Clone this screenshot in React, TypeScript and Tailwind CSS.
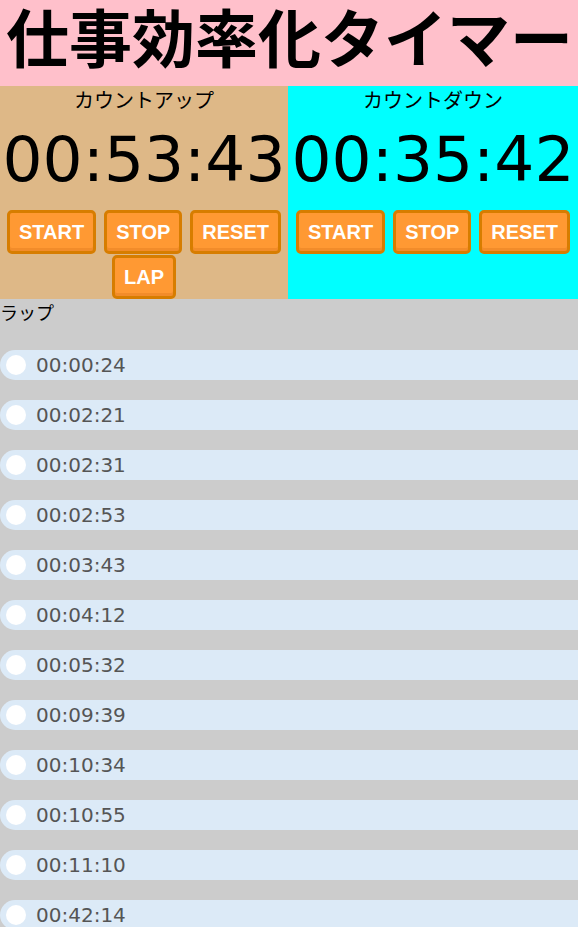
const laps = [
  '00:00:24',
  '00:02:21',
  '00:02:31',
  '00:02:53',
  '00:03:43',
  '00:04:12',
  '00:05:32',
  '00:09:39',
  '00:10:34',
  '00:10:55',
  '00:11:10',
  '00:42:14',
];

const jp = "font-['Noto_Sans_CJK_JP',sans-serif]";

function TimerButton({ label }: { label: string }) {
  return (
    <button className="h-[44px] px-[9px] flex items-center rounded-[5px] border-[3px] border-[#d77d00] bg-[#ff9933] shadow-[inset_0_-3px_0_#f28c2a] text-white font-bold text-[20px] font-['Liberation_Sans',sans-serif]">
      {label}
    </button>
  );
}

function TimerPanel({
  title,
  time,
  buttons,
  bg,
}: {
  title: string;
  time: string;
  buttons: string[];
  bg: string;
}) {
  return (
    <div className={`${bg} flex flex-col items-center`}>
      <div className={`${jp} h-[28px] leading-[28px] text-[20px] text-black`}>{title}</div>
      <div className="mt-[14px] leading-[64px] text-[63px] text-black whitespace-nowrap font-['DejaVu_Sans',sans-serif]">
        {time}
      </div>
      <div className="mt-[18px] flex flex-wrap justify-center gap-x-2 gap-y-px">
        {buttons.map((b) => (
          <TimerButton key={b} label={b} />
        ))}
      </div>
    </div>
  );
}

export default function App() {
  return (
    <div className="w-[578px] min-h-[927px] bg-[#cccccc]">
      <header className="h-[86px] bg-[#ffc0cb] pl-[6px]">
        <h1 className={`${jp} text-[63px] leading-[70px] font-bold text-black whitespace-nowrap`}>
          仕事効率化タイマー
        </h1>
      </header>

      <div className="grid grid-cols-[288px_1fr]">
        <TimerPanel
          title="カウントアップ"
          time="00:53:43"
          buttons={['START', 'STOP', 'RESET', 'LAP']}
          bg="bg-[#deb887]"
        />
        <TimerPanel
          title="カウントダウン"
          time="00:35:42"
          buttons={['START', 'STOP', 'RESET']}
          bg="bg-[#00ffff]"
        />
      </div>

      <section>
        <div className={`${jp} text-[18px] leading-[26px] text-black`}>ラップ</div>
        <ul className="mt-[25px] flex flex-col gap-[20px]">
          {laps.map((t, i) => (
            <li
              key={i}
              className="h-[30px] flex items-center rounded-l-full bg-[#dceaf7]"
            >
              <span className="ml-[6px] w-[20px] h-[20px] rounded-full bg-white" />
              <span className="ml-[10px] text-[20px] text-[#555555] font-['DejaVu_Sans',sans-serif]">
                {t}
              </span>
            </li>
          ))}
        </ul>
      </section>
    </div>
  );
}
